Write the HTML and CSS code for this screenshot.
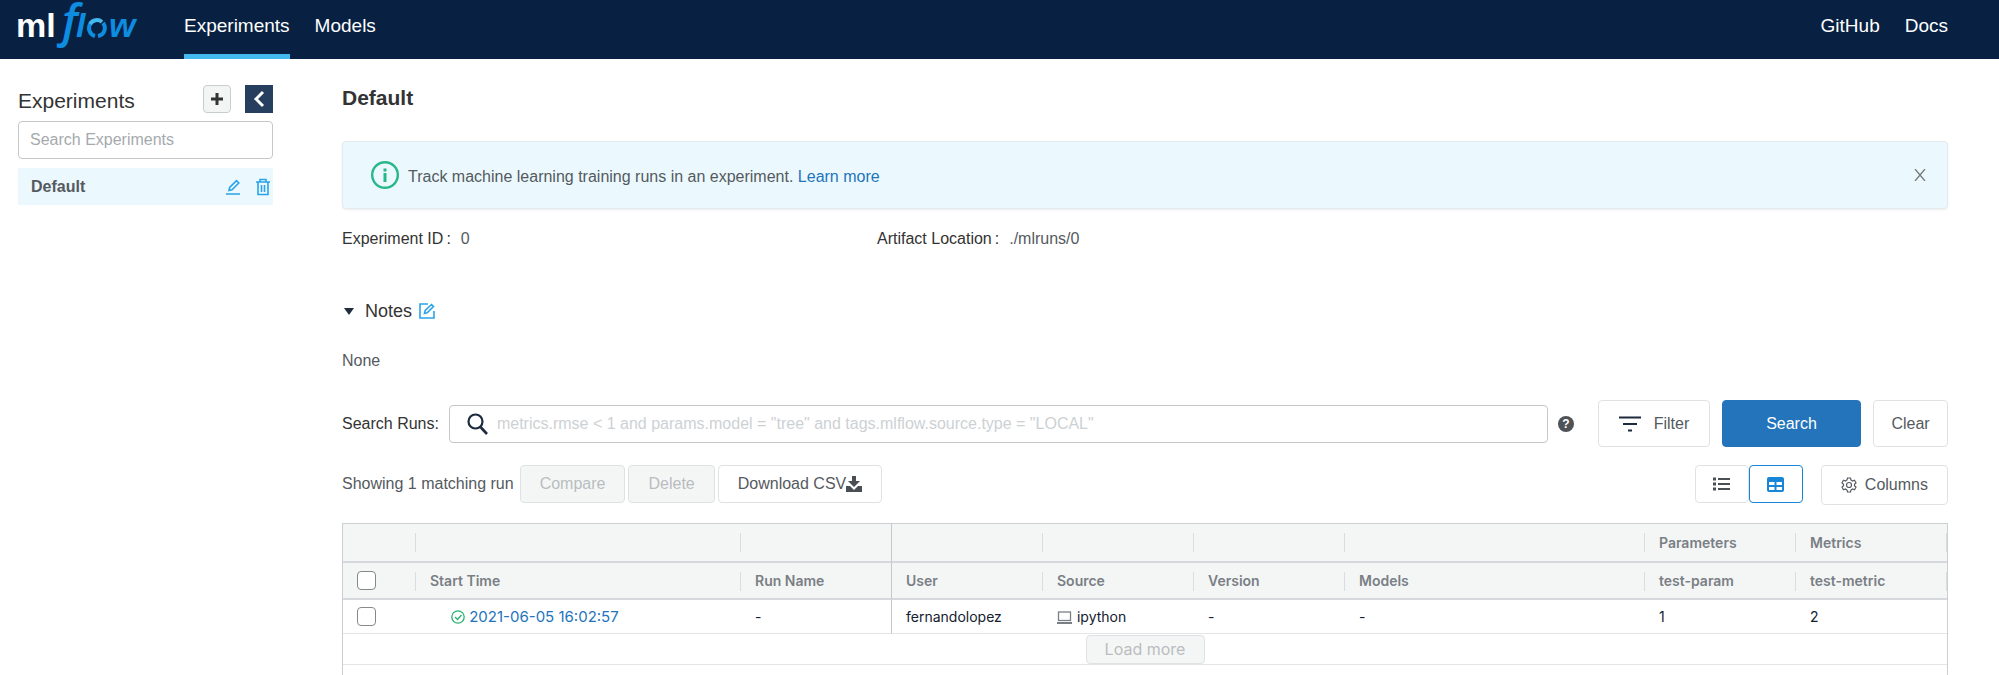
FILE: index.html
```html
<!DOCTYPE html>
<html lang="en">
<head>
  <meta charset="UTF-8" />
  <meta name="viewport" content="width=device-width, initial-scale=1.0" />
  <title>MLflow</title>
  <link rel="stylesheet" href="styles.css">
</head>
<body>
  <header class="header">
    <a href="#" class="logo" aria-label="mlflow">
      <svg width="124" height="52" viewBox="0 0 124 52">
        <text class="logo-ml" x="0" y="37">ml</text>
        <text class="logo-f" x="46" y="37">f</text>
        <text class="logo-flow" x="60" y="37">l</text>
        <path d="M79 36a8 8 0 0 1-4-13" fill="none" stroke="#0d8ce0" stroke-width="4"/>
        <path d="M74 24a8 8 0 0 1 12-2" fill="none" stroke="#43b9f0" stroke-width="4"/>
        <path d="M87 23a8 8 0 0 1-5 13" fill="none" stroke="#0d8ce0" stroke-width="4"/>
        <text class="logo-flow" x="93" y="37">w</text>
      </svg>
    </a>
    <nav class="nav">
      <a href="#" class="active">Experiments</a>
      <a href="#">Models</a>
    </nav>
    <nav class="nav nav-right">
      <a href="#">GitHub</a>
      <a href="#">Docs</a>
    </nav>
  </header>

  <div class="page">
    <aside class="sidebar">
      <div class="sidebar-head">
        <h1>Experiments</h1>
        <button type="button" class="add-btn" aria-label="New experiment">
          <svg width="14" height="14" viewBox="0 0 14 14"><path d="M7 1v12M1 7h12" stroke="#333" stroke-width="3"/></svg>
        </button>
        <button type="button" class="collapse-btn" aria-label="Collapse">
          <svg width="12" height="18" viewBox="0 0 12 18"><path d="M10 2L3 9l7 7" fill="none" stroke="#fff" stroke-width="3"/></svg>
        </button>
      </div>
      <input type="text" class="exp-search" placeholder="Search Experiments" aria-label="Search Experiments">
      <div class="exp-item">
        <a href="#" class="exp-name">Default</a>
        <button type="button" class="icon-btn" aria-label="Rename">
          <svg width="16" height="16" viewBox="0 0 16 16" fill="none" stroke="#2ba3e8" stroke-width="1.600"><path d="M1 15h14M4 11.500l.7-3L11.500 1.700l2.300 2.300L7 10.800z"/></svg>
        </button>
        <button type="button" class="icon-btn" aria-label="Delete experiment">
          <svg width="16" height="18" viewBox="0 0 16 18" fill="none" stroke="#2ba3e8" stroke-width="1.600"><path d="M1 4h14M5 4V1.500h6V4M3 4v12.500h10V4M6.500 7v7M9.500 7v7"/></svg>
        </button>
      </div>
    </aside>

    <main class="main">
      <h2>Default</h2>

      <div class="alert">
        <svg width="28" height="28" viewBox="0 0 28 28"><circle cx="14" cy="14" r="12.800" fill="none" stroke="#27b88a" stroke-width="2.400"/><path d="M14 12v9M14 7.500v3" stroke="#27b88a" stroke-width="3"/></svg>
        <p>Track machine learning training runs in an experiment. <a href="#">Learn more</a></p>
        <button type="button" class="icon-btn" aria-label="Close">
          <svg width="12" height="12" viewBox="0 0 12 12"><path d="M1 0l10 12M11 0L1 12" stroke="#777" stroke-width="1.300"/></svg>
        </button>
      </div>

      <dl class="info">
        <div><dt>Experiment ID</dt><dd>0</dd></div>
        <div><dt>Artifact Location</dt><dd>./mlruns/0</dd></div>
      </dl>

      <div class="notes-head">
        <svg width="10" height="8" viewBox="0 0 10 8"><path d="M0 1h10L5 8z" fill="#1f2d3d"/></svg>
        <h3>Notes</h3>
        <button type="button" class="icon-btn" aria-label="Edit notes">
          <svg width="16" height="16" viewBox="0 0 16 16" fill="none" stroke="#2ba3e8" stroke-width="1.600"><path d="M9 1H1v14h14V8M5.500 10.500l.7-3L12.500 1.500l2 2-6.300 6.300z"/></svg>
        </button>
      </div>
      <p class="notes-text">None</p>

      <form class="search-row">
        <label for="runSearch">Search Runs:</label>
        <div class="run-search">
          <svg width="21" height="22" viewBox="0 0 21 22" fill="none" stroke="#1c2b3d"><circle cx="8.500" cy="8.500" r="7" stroke-width="2.200"/><path d="M13.500 14l6.500 7" stroke-width="2.600"/></svg>
          <input type="text" id="runSearch" placeholder='metrics.rmse &lt; 1 and params.model = "tree" and tags.mlflow.source.type = "LOCAL"'>
        </div>
        <span class="help">?</span>
        <button type="button" class="btn btn-tall filter-btn">
          <svg width="22" height="16" viewBox="0 0 22 16" stroke="#1c2b3d" stroke-width="2.200"><path d="M0 1.500h22M4 8h14M9 14.500h4"/></svg>
          Filter
        </button>
        <button type="submit" class="btn btn-tall btn-primary">Search</button>
        <button type="reset" class="btn btn-tall clear-btn">Clear</button>
      </form>

      <div class="toolbar">
        <span class="count">Showing 1 matching run</span>
        <button type="button" class="btn" disabled>Compare</button>
        <button type="button" class="btn" disabled>Delete</button>
        <button type="button" class="btn">Download CSV<svg width="16" height="16" viewBox="0 0 16 16" fill="#4a4f55"><path d="M6 0h4v5h4l-6 6-6-6h4z"/><path d="M0 10h4l4 4 4-4h4v6H0z"/></svg></button>
        <div class="view-toggle">
          <button type="button" class="btn" aria-label="List view">
            <svg width="17" height="14" viewBox="0 0 17 14" stroke="#4a4f55" stroke-width="2.200"><path d="M0 2h3M0 7h3M0 12h3" stroke-width="3"/><path d="M5 2h12M5 7h12M5 12h12"/></svg>
          </button>
          <button type="button" class="btn selected" aria-label="Grid view">
            <svg width="17" height="15" viewBox="0 0 17 15"><rect width="17" height="15" rx="2" fill="#1785d8"/><path d="M2 5h5.500v3H2zM9.500 5H15v3H9.500zM2 10h5.500v3H2zM9.500 10H15v3H9.500z" fill="#fff"/></svg>
          </button>
        </div>
        <button type="button" class="btn columns-btn">
          <svg width="16" height="16" viewBox="0 0 16 16" fill="none" stroke="#555a60" stroke-width="1.200"><path d="M6.500 1h3l.5 2 1.500 1 2-.700L15 5.800 13.500 7.300v1.400l1.500 1.500-1.500 2.500-2-.700-1.500 1-.5 2h-3l-.5-2-1.500-1-2 .700L1 10.200l1.500-1.500V7.300L1 5.800l1.500-2.500 2 .700L6 3z"/><circle cx="8" cy="8" r="2.500"/></svg>
          Columns
        </button>
      </div>

      <div class="runs">
        <table>
          <colgroup>
            <col class="col-check"><col class="col-time"><col class="col-std"><col class="col-std"><col class="col-std"><col class="col-std"><col><col class="col-std"><col class="col-std">
          </colgroup>
          <thead>
            <tr class="group-row">
              <th></th><th></th><th class="pinned"></th><th></th><th></th><th></th><th></th><th>Parameters</th><th>Metrics</th>
            </tr>
            <tr>
              <th><input type="checkbox" aria-label="Select all runs"></th>
              <th>Start Time</th>
              <th class="pinned">Run Name</th>
              <th>User</th>
              <th>Source</th>
              <th>Version</th>
              <th>Models</th>
              <th>test-param</th>
              <th>test-metric</th>
            </tr>
          </thead>
          <tbody>
            <tr>
              <td><input type="checkbox" aria-label="Select run"></td>
              <td class="time">
                <svg width="14" height="14" viewBox="0 0 14 14" fill="none" stroke="#27b070" stroke-width="1.300"><circle cx="7" cy="7" r="6.200"/><path d="M4 7l2.500 2.500L10.500 5"/></svg>
                <a href="#">2021-06-05 16:02:57</a>
              </td>
              <td class="pinned">-</td>
              <td>fernandolopez</td>
              <td>
                <svg class="laptop" width="15" height="13" viewBox="0 0 15 13" fill="none" stroke="#7a7f85" stroke-width="1.300"><rect x="1.500" y="1" width="12" height="8.500"/><path d="M0 12h15" stroke-width="2"/></svg>
                ipython
              </td>
              <td>-</td>
              <td>-</td>
              <td>1</td>
              <td>2</td>
            </tr>
            <tr class="more-row">
              <td colspan="9"><button type="button" class="btn more-btn" disabled>Load more</button></td>
            </tr>
          </tbody>
        </table>
      </div>
    </main>
  </div>
</body>
</html>
```

FILE: styles.css
```css
* {
  box-sizing: border-box;
}
body {
  margin: 0;
  min-height: 100vh;
  display: flex;
  flex-direction: column;
  font-family: "Liberation Sans", Arial, sans-serif;
  font-size: 16px;
  line-height: 20px;
  color: #555a60;
  background: #fff;
}
h1, h2, h3, p, dl, dd {
  margin: 0;
}
a {
  color: #2374bb;
  text-decoration: none;
}
button, input {
  font: inherit;
}
button {
  cursor: pointer;
}
svg {
  flex: none;
}

/* header */
.header {
  display: flex;
  height: 59px;
  padding: 0 51px 0 16px;
  background: #082142;
}
.logo {
  width: 168px;
}
.logo svg {
  overflow: visible;
}
.logo-ml {
  font: bold 34px "Liberation Sans", sans-serif;
  fill: #fff;
}
.logo-f {
  font: italic 600 46px "Open Sans", sans-serif;
  fill: #0d8ce0;
}
.logo-flow {
  font: italic bold 34px "Liberation Sans", sans-serif;
  fill: #0d8ce0;
}
.nav {
  display: flex;
  gap: 25px;
}
.nav a {
  padding-top: 16px;
  font-size: 19px;
  color: #fff;
  border-bottom: 5px solid transparent;
}
.nav a.active {
  border-color: #43b9f0;
}
.nav-right {
  margin-left: auto;
}

.page {
  flex: 1;
  display: flex;
}

/* sidebar */
.sidebar {
  width: 273px;
  padding: 26px 0 0 18px;
}
.sidebar-head {
  display: flex;
  align-items: center;
  gap: 14px;
}
.sidebar-head h1 {
  flex: 1;
  padding-top: 3px;
  font-size: 21px;
  font-weight: normal;
  color: #333;
}
.add-btn, .collapse-btn {
  display: flex;
  align-items: center;
  justify-content: center;
  width: 28px;
  height: 28px;
  padding: 0;
}
.add-btn {
  background: #f3f5f5;
  border: 1px solid #c8cdd0;
  border-radius: 4px;
}
.collapse-btn {
  background: #263f5f;
  border: none;
}
.exp-search {
  display: block;
  width: 100%;
  height: 38px;
  margin: 8px 0 9px;
  padding: 0 11px;
  border: 1px solid #c4c8cb;
  border-radius: 4px;
}
.exp-search::placeholder {
  color: #a5aaae;
}
.exp-item {
  display: flex;
  align-items: center;
  gap: 14px;
  height: 37px;
  padding: 0 2px 0 13px;
  background: #ebf8fd;
}
.exp-name {
  flex: 1;
  font-weight: bold;
  color: #555a60;
}
.icon-btn {
  display: flex;
  padding: 0;
  background: none;
  border: none;
}

/* main */
.main {
  flex: 1;
  display: flex;
  flex-direction: column;
  padding: 0 51px 0 69px;
}
.main h2 {
  margin: 29px 0 33px;
  font-size: 21px;
  color: #333;
}
.alert {
  display: flex;
  align-items: center;
  gap: 9px;
  height: 68px;
  padding: 0 21px 0 28px;
  background: #ebf9fe;
  border: 1px solid #e4ebee;
  border-radius: 4px;
  box-shadow: 0 1px 2px rgba(0,0,0,0.08);
}
.alert p {
  flex: 1;
  padding-top: 3px;
}
.info {
  display: flex;
  margin-top: 20px;
}
.info div {
  display: flex;
  gap: 10px;
  width: 535px;
}
.info dt {
  color: #333;
}
.info dt::after {
  content: ":";
  margin-left: 3px;
}
.notes-head {
  display: flex;
  align-items: center;
  gap: 7px;
  margin-top: 52px;
  padding-left: 2px;
}
.notes-head h3 {
  margin-left: 4px;
  font-size: 18px;
  font-weight: normal;
  color: #333;
}
.notes-text {
  margin-top: 30px;
}

/* run search */
.search-row {
  display: flex;
  align-items: center;
  gap: 12px;
  margin-top: 29px;
}
.search-row label {
  margin-right: -2px;
  color: #333;
}
.run-search {
  flex: 1;
  display: flex;
  align-items: center;
  gap: 9px;
  height: 38px;
  padding: 0 17px;
  border: 1px solid #c4c8cb;
  border-radius: 4px;
}
.run-search input {
  flex: 1;
  padding: 0;
  border: none;
  outline: none;
}
.run-search input::placeholder {
  color: #cdd1d4;
}
.help {
  width: 16px;
  height: 16px;
  margin: 0 12px 0 -2px;
  border-radius: 50%;
  background: #4f5358;
  color: #fff;
  font-size: 12px;
  font-weight: bold;
  line-height: 16px;
  text-align: center;
}
.btn {
  display: flex;
  align-items: center;
  justify-content: center;
  height: 38px;
  padding: 0 19px;
  background: #fff;
  color: #555a60;
  border: 1px solid #dfe2e4;
  border-radius: 4px;
}
.btn:disabled {
  background: #f4f6f6;
  color: #b9bdc0;
}
.btn-tall {
  height: 47px;
}
.filter-btn {
  width: 112px;
  gap: 13px;
}
.btn-primary {
  width: 139px;
  background: #2374bb;
  border-color: #2374bb;
  color: #fff;
}
.clear-btn {
  width: 75px;
}

/* toolbar */
.toolbar {
  display: flex;
  align-items: flex-start;
  gap: 3px;
  margin-top: 18px;
}
.count {
  margin-right: 3px;
  line-height: 38px;
}
.view-toggle {
  display: flex;
  margin: 0 15px 0 auto;
}
.view-toggle .btn {
  width: 54px;
}
.view-toggle .selected {
  border-color: #1785d8;
}
.columns-btn {
  height: 40px;
  gap: 8px;
}

/* runs table */
.runs {
  flex: 1;
  margin-top: 18px;
  border: 1px solid #cbcfd2;
  border-bottom: none;
}
table {
  width: 100%;
  table-layout: fixed;
  border-collapse: separate;
  border-spacing: 0;
  font-family: Inter, sans-serif;
  font-size: 14px;
}
.col-check {
  width: 73px;
}
.col-time {
  width: 325px;
}
.col-std {
  width: 151px;
}
th, td {
  padding: 0 14px;
  text-align: left;
  white-space: nowrap;
}
th {
  position: relative;
  height: 37px;
  background: #f4f6f6;
  border-bottom: 2px solid #d5d8dc;
  font-weight: 600;
  color: #7a7f85;
}
.group-row th {
  height: 39px;
}
th::after {
  content: "";
  position: absolute;
  top: 9px;
  right: 0;
  width: 1px;
  height: 19px;
  background: #dadddf;
}
td {
  height: 34px;
  border-bottom: 1px solid #e3e5e8;
  color: #14202e;
}
.pinned {
  border-right: 1px solid #c4c8cc;
}
th.pinned::after {
  display: none;
}
input[type="checkbox"] {
  appearance: none;
  display: block;
  width: 19px;
  height: 19px;
  margin: 0;
  border: 1px solid #85898d;
  border-radius: 4px;
  background: #fff;
}
td.time {
  padding-left: 35px;
  font-size: 15px;
}
td svg {
  vertical-align: -2px;
}
.laptop {
  margin-right: 1px;
}
.more-row td {
  height: 31px;
  padding: 0;
}
.more-btn {
  width: 119px;
  height: 29px;
  margin: 0 auto;
  font-family: Inter, sans-serif;
  font-size: 16px;
}
```
